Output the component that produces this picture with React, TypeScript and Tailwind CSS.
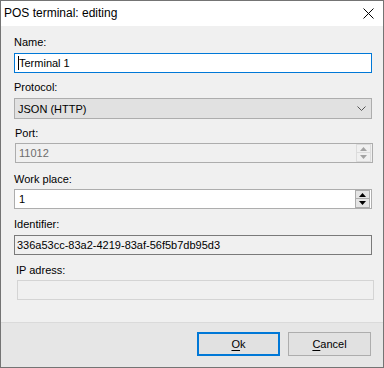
import React from "react";

const font = { fontFamily: '"Liberation Sans", Arial, sans-serif' };

function Spin({ disabled }: { disabled?: boolean }) {
  const c = disabled ? "#a3a3a3" : "#000000";
  const btn = disabled
    ? "bg-[#f0f0f0] border border-[#dcdcdc]"
    : "bg-[#e5e5e5] border border-[#adadad]";
  return (
    <div className="flex flex-col w-[15px] h-[18px] my-auto mr-[1px]">
      <div className={`h-[9px] flex items-center justify-center ${btn}`}>
        <svg width="7" height="4" viewBox="0 0 7 4">
          <polygon points="3.5,0 7,4 0,4" fill={c} />
        </svg>
      </div>
      <div className={`h-[9px] flex items-center justify-center border-t-0 ${btn}`}>
        <svg width="7" height="4" viewBox="0 0 7 4">
          <polygon points="0,0 7,0 3.5,4" fill={c} />
        </svg>
      </div>
    </div>
  );
}

function Label({ children, className = "" }: { children: React.ReactNode; className?: string }) {
  return <div className={`h-[13px] leading-[13px] text-[11px] text-black ${className}`}>{children}</div>;
}

export default function App() {
  return (
    <div
      className="w-[384px] h-[368px] flex flex-col border border-[#747474] bg-[#f0f0f0] overflow-hidden"
      style={font}
    >
      {/* Title bar */}
      <div className="h-[25px] bg-white flex items-center justify-between pl-[3px] pr-[9px] shrink-0">
        <span className="text-[12px] leading-[25px] text-black">POS terminal: editing</span>
        <svg width="11" height="11" viewBox="0 0 11 11" className="mb-[1px]">
          <path d="M0.5 0.5 L10.5 10.5 M10.5 0.5 L0.5 10.5" stroke="#000" strokeWidth="1" />
        </svg>
      </div>

      {/* Body */}
      <div className="flex-1 flex flex-col pl-[13px] pt-[10px]">
        <Label>Name:</Label>
        <div className="mt-[4px] w-[358px] h-[20px] bg-white border border-[#0078d7] flex items-center pl-[3px]">
          <span className="w-[1px] h-[14px] bg-black"></span>
          <span className="text-[11px] leading-[18px] text-black">Terminal 1</span>
        </div>

        <Label className="mt-[8px]">Protocol:</Label>
        <div className="mt-[4px] w-[358px] h-[21px] bg-[#e1e1e1] border border-[#adadad] flex items-center justify-between pl-[3px] pr-[5px]">
          <span className="text-[11px] leading-[19px] text-black pt-[1px]">JSON (HTTP)</span>
          <svg width="9" height="5" viewBox="0 0 9 5">
            <path d="M0.5 0.5 L4.5 4.5 L8.5 0.5" stroke="#555" strokeWidth="1" fill="none" />
          </svg>
        </div>

        <Label className="mt-[8px] ml-[1px]">Port:</Label>
        <div className="mt-[3px] ml-[1px] w-[358px] h-[20px] bg-[#f0f0f0] border border-[#adadad] flex items-stretch">
          <span className="flex-1 text-[11px] leading-[18px] text-[#6d6d6d] pl-[3px]">11012</span>
          <Spin disabled />
        </div>

        <Label className="mt-[10px]">Work place:</Label>
        <div className="mt-[3px] w-[358px] h-[20px] bg-white border border-[#adadad] flex items-stretch">
          <span className="flex-1 text-[11px] leading-[18px] text-black pl-[4px]">1</span>
          <Spin />
        </div>

        <Label className="mt-[9px]">Identifier:</Label>
        <div className="mt-[4px] w-[358px] h-[20px] bg-[#f0f0f0] border border-[#7a7a7a] flex items-center pl-[2px]">
          <span className="text-[11px] leading-[17px] text-black">336a53cc-83a2-4219-83af-56f5b7db95d3</span>
        </div>

        <Label className="mt-[9px] ml-[2px]">IP adress:</Label>
        <div className="mt-[3px] ml-[3px] w-[357px] h-[20px] bg-[#f0f0f0] border border-[#d4d4d4]"></div>
      </div>

      {/* Footer */}
      <div className="h-[45px] shrink-0 border-t border-[#dadada] bg-[#e6e6e6] flex justify-end items-start pt-[9px] pr-[12px] gap-[8px]">
        <button className="w-[83px] h-[24px] bg-[#e1e1e1] border-2 border-[#0078d7] text-[11px] text-black leading-[20px]">
          <span className="underline underline-offset-2">O</span>k
        </button>
        <button className="w-[83px] h-[24px] bg-[#e1e1e1] border border-[#adadad] text-[11px] text-black leading-[22px]">
          <span className="underline underline-offset-2">C</span>ancel
        </button>
      </div>
    </div>
  );
}
